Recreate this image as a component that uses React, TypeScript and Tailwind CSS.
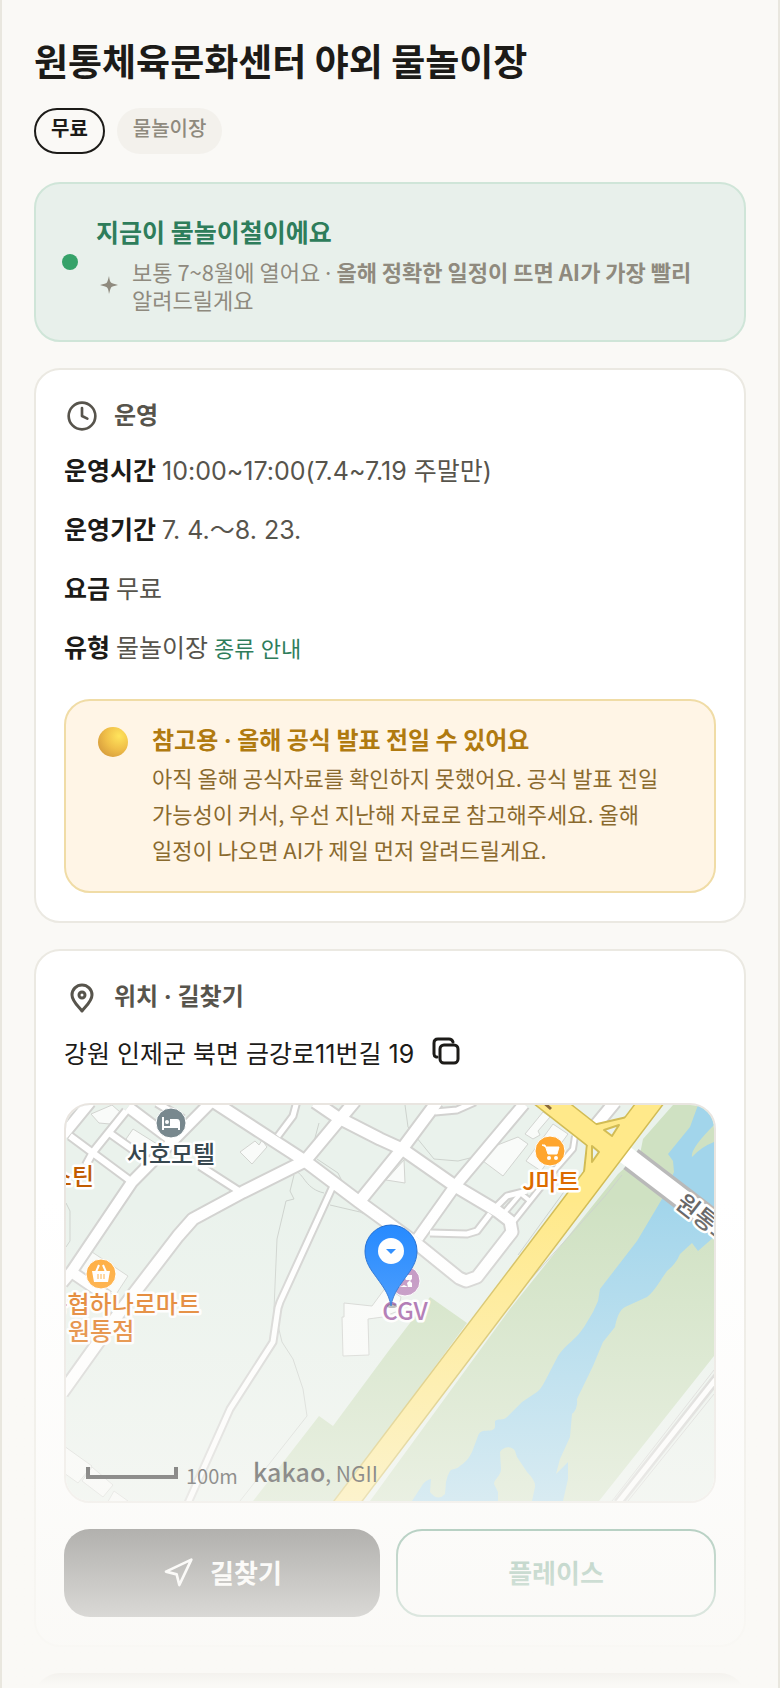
import { Clock, Navigation } from 'lucide-react';

const rows = [
  { label: '운영시간', value: '10:00~17:00(7.4~7.19 주말만)' },
  { label: '운영기간', value: '7. 4.～8. 23.' },
  { label: '요금', value: '무료' },
  { label: '유형', value: '물놀이장', link: '종류 안내' },
];

const mapLabel = {
  fontSize: 24,
  fontWeight: 500,
  stroke: '#fff',
  strokeWidth: 5,
  strokeLinejoin: 'round',
  paintOrder: 'stroke',
} as const;

// each group of roads is stroked twice: grey casing, then white surface
const roads = [
  {
    width: 5,
    d: 'M267 81L214 197L212 203L207 237L164 304L122 398M231 -4L227 11L212 31M364 128L401 129L411 126L424 109M431 101L441 91L461 86M369 7L391 5L409 -3',
  },
  {
    width: 4,
    d: 'M448 116L487 67L507 44L509 31M454 88L464 96M438 108L455 88',
  },
  {
    width: 6,
    d: 'M60 6L27 47L20 60M4 31L66 77M42 27L87 59M91 -2L117 14M134 61L176 88',
  },
  {
    width: 10,
    d: 'M24 -3L-3 30M62 2L110 38M146 -4L66 77L6 166L-4 178M4 166L42 192M458 -1L389 81L352 133',
  },
  {
    width: 11,
    d: 'M148 -3L239 56L292 96L351 139L393 173L400 176L411 172L446 127L444 116L431 106L389 81L336 44L314 34L271 12L249 -3M289 -4L239 56L177 87L127 114L112 131L56 204L-4 288M371 -3L336 44L293 97M549 -3L530 20',
  },
];

function Dot() {
  return <span className="font-['Inter'] leading-none">·</span>;
}

function LocationMap() {
  return (
    <svg
      viewBox="0 0 648 396"
      preserveAspectRatio="xMidYMid slice"
      className="block h-99 w-full"
      role="img"
      aria-label="지도"
    >
      <rect width="648" height="396" fill="#eaf2ec" />

      {/* parks and river */}
      <path d="M648 0H607L577 34L574 49L552 69L444 204L304 396H533L648 251Z" fill="#cfe1c2" />
      <path d="M364 192L401 218L270 396H187L253 311L267 321L324 244Z" fill="#cfe1c2" />
      <path
        d="M632 0L624 22L602 49L607 56L608 67L596 94L571 136L544 171L534 184L532 196L527 207C520 219 516 226 511 231C503 239 497 243 492 251L479 276Q475 284 471 287L456 297L441 312C437 316 432 313 429 316V322C428 327 421 325 417 326Q413 327 412 331L406 347C402 355 398 358 394 361C390 365 387 363 384 366Q381 371 380 377L379 389Q372 397 364 387L365 374Q360 375 357 379L346 396H432V387L428 379C428 374 435 371 435 364L434 347C438 341 446 341 449 346L451 352L461 367Q470 376 469 382L466 396H497L502 374V357L490 369L494 354L504 332L506 309Q512 304 511 294L527 261L537 237L549 222C551 211 554 205 559 202L581 192C589 186 595 174 601 166Q610 159 614 149L626 138L632 146L648 132V37Q635 42 626 52Q624 44 648 20L645 8L638 0Z"
        fill="#a2d5eb"
      />

      {/* parcel lines */}
      <g fill="none" stroke="#cdd2cd" strokeWidth="1">
        <path d="M231 67C238 70 240 84 258 88M228 70L224 86L228 94L220 96L211 134L208 204L216 237L227 254L237 284L241 311L174 396" />
        <path d="M264 100L294 107L324 121M251 54L272 68L277 78M339 0L342 22L368 54L392 56L416 50M0 98L4 106V136L0 142" />
        <path d="M556 70L540 90L438 204M500 84L452 150M253 18L246 44" />
      </g>

      {/* buildings */}
      <g fill="#f9fbf9" stroke="#d2d4d0" strokeWidth="1">
        <path d="M278 198L306 201L320 182L335 192L332 206L317 212L302 214L303 250L277 251L276 212H278Z" />
        <path d="M417 56L429 41L452 32L462 39L437 71Z" />
        <path d="M459 29L477 7L484 12L472 26L474 30L467 34Z" />
        <path d="M487 19L502 29L475 66L460 56Z" />
        <path d="M320 75L338 55L339 78Z" />
        <path d="M174 47L189 36L193 40L196 35L201 42L186 59Z" />
        <path d="M60 34L67 24L99 44L86 60Z" />
        <path d="M25 9L46 0L54 7L44 19L33 18Z" />
        <path d="M26 147L62 171L49 191L11 166Z" />
        <path d="M-2 341L26 361L12 378L-2 368ZM16 376L26 362L47 380L37 392ZM40 400L48 386L62 396Z" />
      </g>

      <g fill="none" strokeLinejoin="round">
        {roads.map((road) => (
          <path key={road.d} d={road.d} stroke="#d2d2d0" strokeWidth={road.width + 4} />
        ))}
        {roads.map((road) => (
          <path key={road.d} d={road.d} stroke="#fff" strokeWidth={road.width} />
        ))}
      </g>

      {/* railway */}
      <path d="M654 269L552 398" stroke="#d2d2d0" strokeWidth="10" />
      <path d="M654 269L552 398" stroke="#fff" strokeWidth="5" />
      <path d="M648 265L546 396M648 289L562 396" stroke="#d2d2d0" strokeWidth="1" />

      {/* bridge */}
      <path d="M565 54L654 122" stroke="#b9b9b9" strokeWidth="25" />
      <path d="M548 41L654 122" stroke="#fff" strokeWidth="18" />

      {/* main road */}
      <g fill="none" strokeLinejoin="round">
        <path d="M475 -10L536 38M590 -10L276 404" stroke="#d2bc55" strokeWidth="24" />
        <path
          d="M508 26L521 39L518 67L512 84L530 66L568 18L580 -2L574 -2L561 12L531 19Z"
          fill="#ffe98a"
          stroke="#d2bc55"
          strokeWidth="2"
        />
        <path d="M475 -10L540 41M590 -10L276 404" stroke="#ffe98a" strokeWidth="21" />
        <path d="M512 30L522 40L520 66L530 62L566 14L532 21Z" fill="#ffe98a" />
        <path
          d="M538 25L553 20L546 31ZM526 41L533 47L526 57Z"
          fill="#eaf2ec"
          stroke="#d2bc55"
          strokeWidth="2"
        />
        <path d="M476 -4L485 4" stroke="#8a6a3a" strokeWidth="3" />
      </g>

      {/* places */}
      <circle cx="105" cy="18" r="15" fill="#78888e" stroke="#fff" strokeWidth="1" />
      <path d="M97 12V25M97 22H113M113 25V17" stroke="#fff" strokeWidth="2" fill="none" />
      <path d="M104 14H111Q114 14 114 18V21H104Z" fill="#fff" />
      <circle cx="101" cy="17" r="2" fill="#fff" />
      <text x="105" y="58" textAnchor="middle" fill="#37474f" {...mapLabel}>서호모텔</text>
      <text x="28" y="80" textAnchor="end" fill="#c15c00" {...mapLabel}>스틴</text>

      <circle cx="35" cy="169" r="15" fill="#ffa62e" stroke="#fff" strokeWidth="1" />
      <path d="M26 166H44L42 177H28Z" fill="#fff" />
      <path d="M30 167L33 160M40 167L37 160" stroke="#fff" strokeWidth="2" />
      <path d="M32 169V174M35 169V174M38 169V174" stroke="#ffa62e" strokeWidth="1" />
      <text x="134" y="208" textAnchor="end" fill="#e07414" {...mapLabel}>농협하나로마트</text>
      <text x="2" y="235" fill="#e07414" {...mapLabel}>원통점</text>

      <circle cx="484" cy="46" r="15" fill="#ffa62e" stroke="#fff" strokeWidth="1" />
      <path d="M476 40H479L482 49H491L493 42H480Z" fill="#fff" stroke="#fff" strokeWidth="1" />
      <circle cx="483" cy="53" r="2" fill="#fff" />
      <circle cx="490" cy="53" r="2" fill="#fff" />
      <text x="485" y="85" textAnchor="middle" fill="#dc6a00" {...mapLabel}>J마트</text>
      <text x="608" y="101" fill="#666" transform="rotate(38 608 101)" {...mapLabel}>원통교</text>

      <circle cx="339" cy="176" r="15" fill="#bd8cbd" stroke="#fff" strokeWidth="1" />
      <path d="M331 170H346V174L344 176L346 178V182H331Z" fill="#fff" />
      <path d="M338 171L340 175L344 175L341 178L342 182L338 180L334 182L335 178L332 175L336 175Z" fill="#bd8cbd" />
      <text x="339" y="215" textAnchor="middle" fill="#a05ca5" {...mapLabel}>CGV</text>

      <ellipse cx="326" cy="201" rx="5" ry="2" fill="#333" opacity="0.4" />
      <path
        d="M325 201C323 188 315 179 308 169C302 161 299 154 299 146A26 26 0 0 1 351 146C351 154 348 161 342 169C335 179 327 188 325 201Z"
        fill="#1b84ff"
        stroke="#1465cf"
        strokeWidth="1"
      />
      <circle cx="325" cy="146" r="13" fill="#fff" />
      <path d="M320 144H330L325 149Z" fill="#1b84ff" />

      {/* scale and attribution */}
      <path d="M22 362V372H110V362" fill="none" stroke="#000" strokeWidth="4" />
      <text x="120" y="379" fontSize="20" fill="#000">100m</text>
      <text x="187" y="377" fontSize="25" fontWeight="500" fill="#000">
        kakao<tspan fontSize="21" fontWeight="400">, NGII</tspan>
      </text>
    </svg>
  );
}

export default function App() {
  return (
    <div className="relative h-screen overflow-hidden border-x-2 border-[#e9e7df] bg-[#faf9f6] font-['Noto_Sans_CJK_KR',sans-serif] break-keep text-[#1c1b18]">
      <main className="flex flex-col px-8 pt-9">
        <h1 className="text-[37px] leading-12 font-bold">
          원통체육문화센터 야외 물놀이장
        </h1>

        <div className="mt-6 flex gap-3 text-xl leading-7">
          <span className="rounded-full border-2 border-[#1c1b18] px-[15px] pt-1 pb-2.5 font-bold">
            무료
          </span>
          <span className="rounded-full bg-[#f3f1ec] px-4 pt-1.5 pb-3 font-medium text-[#8f8a7e]">
            물놀이장
          </span>
        </div>

        <section className="mt-7 flex items-center gap-4.5 rounded-[26px] border-2 border-[#cfe5d8] bg-[#e8f0eb] px-6.5 py-[27px]">
          <span className="size-4 shrink-0 rounded-full bg-[#36a269]" />
          <div className="flex flex-col gap-1.5">
            <h2 className="text-[25px] leading-10 font-bold text-[#2e7d5b]">
              지금이 물놀이철이에요
            </h2>
            <div className="flex items-center gap-3.5 text-[22px] leading-7 text-[#8f8a7e]">
              <svg viewBox="0 0 24 24" className="ml-1 size-4.5 shrink-0 fill-current">
                <path d="M12 0Q13 8 15 9T24 12Q16 14 15 15T12 24Q11 16 9 15T0 12Q8 10 9 9T12 0Z" />
              </svg>
              <p>
                보통 7~8월에 열어요 <Dot />{' '}
                <b className="font-bold">올해 정확한 일정이 뜨면 AI가 가장 빨리</b> 알려드릴게요
              </p>
            </div>
          </div>
        </section>

        <section className="mt-6.5 rounded-[26px] border-2 border-[#ebe9e2] bg-white p-7">
          <div className="flex h-9 items-center gap-3.5 font-['Inter','Noto_Sans_CJK_KR',sans-serif] text-2xl font-bold text-[#57544c]">
            <Clock className="mx-0.5 size-8" strokeWidth={2} />
            <h2>운영</h2>
          </div>
          <dl className="mt-2 font-['Inter','Noto_Sans_CJK_KR',sans-serif] text-[25px] leading-[59px]">
            {rows.map((row) => (
              <div key={row.label} className="flex items-baseline gap-1.5">
                <dt className="font-bold">{row.label}</dt>
                <dd className="text-[#57544c]">{row.value}</dd>
                {row.link && (
                  <a href="#types" className="text-[22px] text-[#2e7d5b]">
                    {row.link}
                  </a>
                )}
              </div>
            ))}
          </dl>
          <div className="mt-5 flex gap-6 rounded-[26px] border-2 border-[#f0dca6] bg-[#fff5e6] px-8 pt-5 pb-6">
            <span className="mt-1.5 size-7.5 shrink-0 rounded-full bg-[radial-gradient(circle_at_70%_30%,#ffe45c,#f0bf49_45%,#d59a3c_85%,#d98a6a)]" />
            <div className="flex flex-col gap-0.5">
              <h3 className="text-2xl leading-9 font-bold text-[#b07a10]">
                참고용 <Dot /> 올해 공식 발표 전일 수 있어요
              </h3>
              <p className="text-[22px] leading-9 text-[#8a6a2e]">
                아직 올해 공식자료를 확인하지 못했어요. 공식 발표 전일 가능성이 커서, 우선 지난해
                자료로 참고해주세요. 올해 일정이 나오면 AI가 제일 먼저 알려드릴게요.
              </p>
            </div>
          </div>
        </section>

        <section className="mt-6.5 rounded-[26px] border-2 border-[#ebe9e2] bg-white p-7">
          <div className="flex h-9 items-center gap-3.5 font-['Inter','Noto_Sans_CJK_KR',sans-serif] text-2xl font-bold text-[#57544c]">
            <svg
              viewBox="0 0 32 32"
              className="mx-0.5 size-8 fill-none stroke-current stroke-3"
              strokeLinejoin="round"
            >
              <path d="M16 30C12 25 6 20 6 14A10 10 0 0 1 26 14C26 20 20 25 16 30Z" />
              <circle cx="16" cy="14" r="3" />
            </svg>
            <h2>위치 · 길찾기</h2>
          </div>
          <div className="mt-3 flex h-14 items-center gap-4.5 font-['Inter','Noto_Sans_CJK_KR',sans-serif] text-[25px]">
            <p>강원 인제군 북면 금강로11번길 19</p>
            <button type="button" aria-label="주소 복사" className="pb-2">
              <svg
                viewBox="0 0 28 28"
                className="size-7 fill-none stroke-current stroke-3"
                strokeLinecap="round"
                strokeLinejoin="round"
              >
                <rect x="8" y="8" width="18" height="18" rx="4" />
                <path d="M5 20H4Q2 19 2 17V6Q2 2 6 2H17Q20 2 21 5" />
              </svg>
            </button>
          </div>
          <div className="mt-5 overflow-hidden rounded-[26px] border-2 border-[#e9e5e0]">
            <LocationMap />
          </div>
          <div className="mt-6.5 flex gap-4 font-['Inter','Noto_Sans_CJK_KR',sans-serif] text-[26px] font-bold">
            <button
              type="button"
              className="flex h-22 flex-1 items-center justify-center gap-4 rounded-[26px] bg-[#1c1b18] text-white"
            >
              <Navigation className="size-8" />
              길찾기
            </button>
            <button
              type="button"
              className="h-22 flex-1 rounded-[26px] border-2 border-[#2e7d5b] text-[#2e7d5b]"
            >
              플레이스
            </button>
          </div>
        </section>

        <section className="relative z-10 mt-6.5 h-40 rounded-[26px] bg-linear-to-b from-[#f4f2ee] to-[#faf9f6] to-[12px]" />
      </main>

      <div className="pointer-events-none absolute inset-x-0 bottom-0 h-122 bg-linear-to-b from-[#faf9f6]/0 to-[#faf9f6]" />
    </div>
  );
}
